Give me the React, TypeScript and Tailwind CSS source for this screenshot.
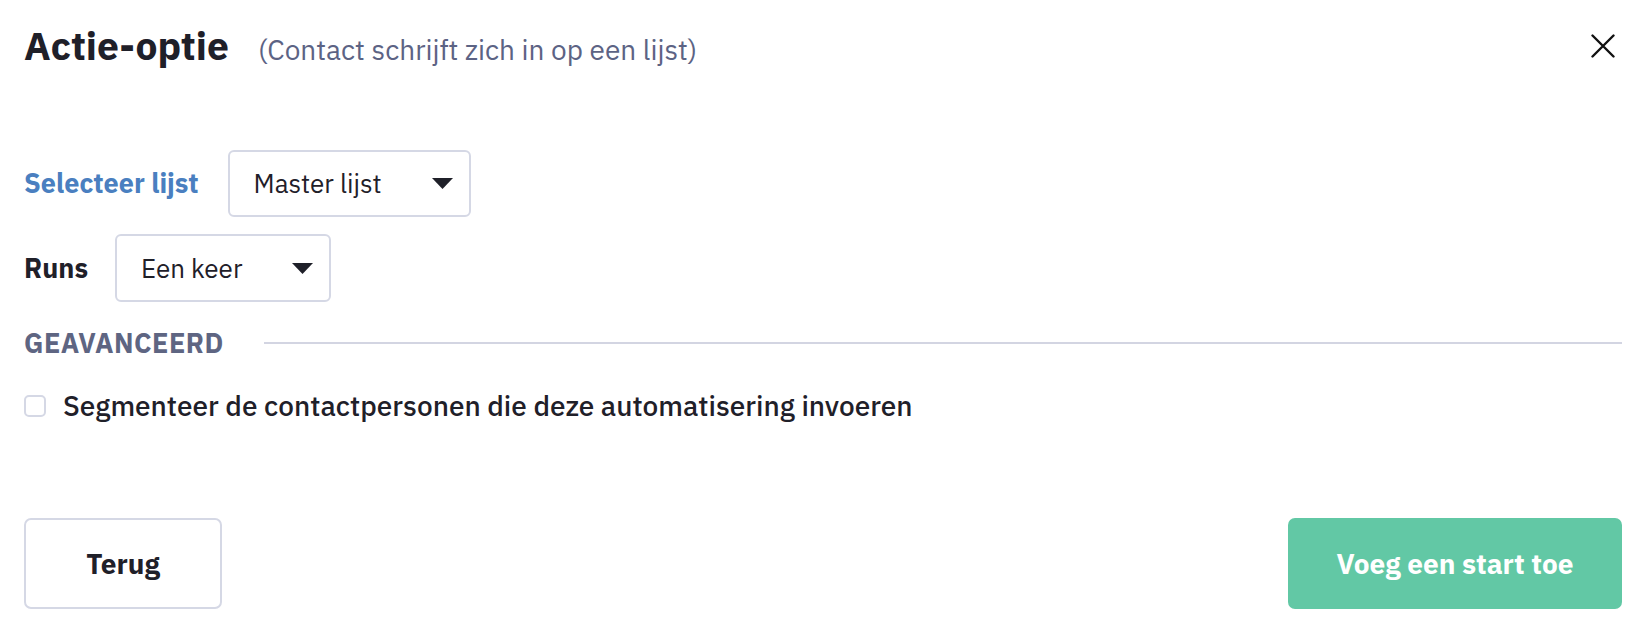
import React from "react";

const font = { fontFamily: "'IBM Plex Sans', Roboto, 'Noto Sans', sans-serif" };

function Caret() {
  return (
    <svg width="21" height="11" viewBox="0 0 21 11" className="shrink-0">
      <path d="M0 0h21L10.5 11z" fill="#1f2029" />
    </svg>
  );
}

function Select({ value }: { value: string }) {
  return (
    <button className="inline-flex h-full items-center gap-[50px] rounded-[6px] border-2 border-[#d5d8e5] bg-white pl-[24px] pr-[16px] text-[26px] text-[#1f2029]">
      <span>{value}</span>
      <Caret />
    </button>
  );
}

export default function App() {
  return (
    <div className="flex h-[624px] w-full flex-col bg-white pl-[24px] pr-[30px]" style={font}>
      {/* Header */}
      <div className="mt-[22px] flex h-[48px] items-center justify-between">
        <div className="flex items-baseline gap-[29px]">
          <h1 className="text-[39px] font-bold text-[#1f2029]">Actie-optie</h1>
          <span className="text-[28px] text-[#5c6384]">(Contact schrijft zich in op een lijst)</span>
        </div>
        <button className="mr-[7px] p-0" aria-label="Sluiten">
          <svg width="24" height="24" viewBox="0 0 24 24" fill="none" stroke="#111" strokeWidth="2.4" strokeLinecap="round">
            <path d="M1.5 1.5l21 21M22.5 1.5l-21 21" />
          </svg>
        </button>
      </div>

      {/* Selecteer lijst */}
      <div className="mt-[80px] flex h-[67px] items-center gap-[29px]">
        <span className="text-[27px] font-bold text-[#4a7fc0]">Selecteer lijst</span>
        <Select value="Master lijst" />
      </div>

      {/* Runs */}
      <div className="mt-[17px] flex h-[68px] items-center gap-[27px]">
        <span className="text-[27px] font-bold text-[#1f2029]">Runs</span>
        <Select value="Een keer" />
      </div>

      {/* Geavanceerd */}
      <div className="mt-[27px] flex h-[28px] items-center gap-[40px]">
        <span className="text-[27px] font-bold tracking-[0.5px] text-[#5e6582]">GEAVANCEERD</span>
        <div className="h-[2px] flex-1 bg-[#d3d5e2]" />
      </div>

      <label className="mt-[35px] flex h-[28px] items-center gap-[17px]">
        <span className="h-[22px] w-[22px] rounded-[5px] border-2 border-[#d5d8e5] bg-white" />
        <span className="text-[28px] font-medium text-[#1f2029]">
          Segmenteer de contactpersonen die deze automatisering invoeren
        </span>
      </label>

      {/* Footer */}
      <div className="mt-[98px] flex h-[91px] justify-between">
        <button className="w-[198px] rounded-[7px] border-2 border-[#d5d8e5] bg-white text-[28px] font-bold text-[#1f2029]">
          Terug
        </button>
        <button className="w-[334px] rounded-[7px] bg-[#62c8a5] text-[28px] font-bold text-white">
          Voeg een start toe
        </button>
      </div>
    </div>
  );
}
